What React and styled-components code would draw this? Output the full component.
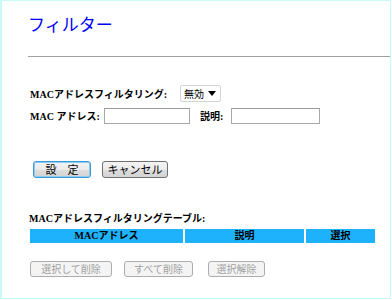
import styled, { createGlobalStyle } from "styled-components";

const GlobalStyle = createGlobalStyle`
  html, body { margin: 0; padding: 0; background: #fff; }
`;

const Page = styled.div`
  box-sizing: border-box;
  width: 391px;
  height: 299px;
  border: 1px solid #c8fafa;
  border-left-width: 2px;
  padding: 14px 0 0 26px;
  font-family: "Liberation Serif", "Noto Sans CJK JP", serif;
  overflow: hidden;
`;

const Title = styled.h1`
  margin: 0;
  font-family: "Noto Sans CJK JP", sans-serif;
  font-size: 17px;
  line-height: 17px;
  font-weight: 400;
  color: #0000ff;
`;

const Rule = styled.div`
  height: 1px;
  margin-top: 24px;
  background: #a0a0a0;
`;

const Form = styled.div`
  display: flex;
  flex-direction: column;
  gap: 5px;
  margin: 28px 0 0 2px;
`;

const Row = styled.div`
  display: flex;
  align-items: center;
  height: 17px;
`;

const Label = styled.span`
  font-size: 10px;
  font-weight: 700;
  color: #000;
  white-space: nowrap;
  width: ${({ $w }) => ($w ? `${$w}px` : "auto")};
  margin-left: ${({ $ml }) => $ml || 0}px;
`;

const Select = styled.div`
  box-sizing: border-box;
  display: flex;
  align-items: center;
  justify-content: space-between;
  width: 41px;
  height: 17px;
  padding: 0 4px 0 3px;
  border: 1px solid #d4d4d4;
  border-radius: 2px;
  background: #fff;
  font-family: "Noto Sans CJK JP", sans-serif;
  font-size: 10px;
  color: #000;
`;

const Input = styled.input`
  box-sizing: border-box;
  width: ${({ $w }) => $w}px;
  height: 16px;
  margin: 0;
  padding: 0 2px;
  border: 1px solid #a8a8a8;
  border-top-color: #9a9a9a;
  background: #fff;
  outline: none;
`;

const ButtonBar = styled.div`
  display: flex;
  gap: ${({ $gap }) => $gap || 11}px;
  margin: ${({ $mt }) => $mt}px 0 0 ${({ $ml }) => $ml || 0}px;
`;

const Button = styled.button`
  box-sizing: border-box;
  width: ${({ $w }) => $w}px;
  height: 17px;
  margin-left: ${({ $ml }) => $ml || 0}px;
  padding: 0;
  border: 1px solid ${({ $focus }) => ($focus ? "#3a9bd8" : "#707070")};
  box-shadow: ${({ $focus }) => ($focus ? "inset 0 0 0 1px #8ccbef" : "none")};
  border-radius: 3px;
  background: linear-gradient(#f3f3f3 0%, #ebebeb 50%, #dddddd 51%, #d4d4d4 100%);
  font-family: "Noto Sans CJK JP", sans-serif;
  font-size: 11px;
  line-height: 15px;
  color: #000;
  white-space: pre;
`;

const GhostButton = styled(Button)`
  height: 16px;
  border-color: #adadad;
  background: #f4f4f4;
  color: #a0a0a0;
  font-size: 10px;
  line-height: 14px;
`;

const TableTitle = styled.div`
  margin: 35px 0 0 1px;
  font-size: 10px;
  font-weight: 700;
  line-height: 12px;
  color: #000;
`;

const HeaderRow = styled.div`
  display: grid;
  grid-template-columns: 153px 119px 69px;
  gap: 2px;
  width: 345px;
  margin: 4px 0 0 2px;
`;

const HeaderCell = styled.div`
  height: 14px;
  background: #1eb1fc;
  text-align: center;
  font-size: 10px;
  font-weight: 700;
  line-height: 14px;
  color: #000;
`;

const Arrow = () => (
  <svg width="8" height="5" viewBox="0 0 8 5">
    <path d="M0 0h8L4 5z" fill="#000" />
  </svg>
);

export default function App() {
  return (
    <>
      <GlobalStyle />
      <Page>
        <Title>フィルター</Title>
        <Rule />
        <Form>
          <Row>
            <Label $w={150}>MACアドレスフィルタリング:</Label>
            <Select>
              無効
              <Arrow />
            </Select>
          </Row>
          <Row>
            <Label $w={74}>MAC アドレス:</Label>
            <Input $w={86} />
            <Label $w={31} $ml={10}>説明:</Label>
            <Input $w={89} />
          </Row>
        </Form>
        <ButtonBar $mt={37} $ml={5}>
          <Button $w={58} $focus>設　定</Button>
          <Button $w={66}>キャンセル</Button>
        </ButtonBar>
        <TableTitle>MACアドレスフィルタリングテーブル:</TableTitle>
        <HeaderRow>
          <HeaderCell>MACアドレス</HeaderCell>
          <HeaderCell>説明</HeaderCell>
          <HeaderCell>選択</HeaderCell>
        </HeaderRow>
        <ButtonBar $mt={18} $ml={2} $gap={12}>
          <GhostButton $w={82}>選択して削除</GhostButton>
          <GhostButton $w={69}>すべて削除</GhostButton>
          <GhostButton $w={57} $ml={3}>選択解除</GhostButton>
        </ButtonBar>
      </Page>
    </>
  );
}
